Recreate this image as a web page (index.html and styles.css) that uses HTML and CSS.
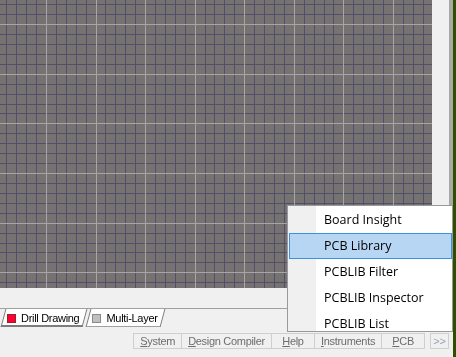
FILE: index.html
```html
<!DOCTYPE html>
<html>
<head>
<meta charset="utf-8">
<title>PCB Editor</title>
<link rel="stylesheet" href="styles.css">
</head>
<body>

<div class="window">
  <div class="main">
    <div class="editor">
      <canvas id="grid" class="grid" width="432" height="288"></canvas>
      <div class="vscroll"></div>
      <div class="edge"></div>
    </div>

    <div class="panel-gap"></div>

    <div class="layer-tabs">
      <div class="tab tab-active"><span class="swatch swatch-drill"></span>Drill Drawing</div>
      <div class="tab tab-next"><span class="swatch swatch-multi"></span>Multi-Layer</div>
    </div>

    <div class="statusbar">
      <span class="sb-btn"><u>S</u>ystem</span>
      <span class="sb-btn"><u>D</u>esign Compiler</span>
      <span class="sb-btn"><u>H</u>elp</span>
      <span class="sb-btn"><u>I</u>nstruments</span>
      <span class="sb-btn"><u>P</u>CB</span>
      <span class="sb-btn sb-more">&gt;&gt;</span>
    </div>
  </div>
  <div class="green-edge"></div>
</div>

<div class="popup-menu">
  <div class="menu-item">Board Insight</div>
  <div class="menu-item menu-item-hot">PCB Library</div>
  <div class="menu-item">PCBLIB Filter</div>
  <div class="menu-item">PCBLIB Inspector</div>
  <div class="menu-item">PCBLIB List</div>
</div>

<script src="script.js"></script>
</body>
</html>
```

FILE: styles.css
```css
body {margin:0; background-color:#F0F0F0; font-family:"Liberation Sans", Arial, sans-serif; font-size:11px;}

.window {display:flex; width:456px; height:357px; overflow:hidden;}
.main {width:453px; display:flex; flex-direction:column;}
.green-edge {width:3px; background-color:#2E4D05;}

/* canvas + scroll column */
.editor {display:flex; height:288px;}
.grid {display:block; width:432px; height:288px;}
.vscroll {width:17px; background-color:#F0F0F0;}
.edge {width:4px; background-color:#A9A9A4;}

.panel-gap {height:20px;}

/* layer tabs */
.layer-tabs {display:flex; height:20px; border-top:1px solid #A0A0A0; padding-left:3px; letter-spacing:-0.3px; color:#000000;}
.tab {position:relative; z-index:0; display:flex; align-items:center; height:18px; padding:0 6px 0 4px;}
.tab::before {content:""; position:absolute; top:0; bottom:0; left:0; right:0; z-index:-1; background-color:#FFFFFF; border-left:1px solid #7D7D7D; border-right:1px solid #7D7D7D; border-bottom:2px solid #7D7D7D; transform:skewX(-15deg);}
.tab-next {margin-left:3px;}
.tab-next::before {border-bottom:1px solid #A0A0A0;}
.swatch {width:9px; height:9px; box-sizing:border-box; margin-right:5px; border:1px solid #8A8A8A;}
.swatch-drill {background-color:#FF0033; border-color:#9A2030;}
.swatch-multi {background-color:#C0C0C0;}

/* status bar buttons */
.statusbar {display:flex; justify-content:flex-end; padding:4px 4px 0 0; height:24px; letter-spacing:-0.3px;}
.sb-btn {box-sizing:border-box; min-width:44px; height:16px; line-height:15px; padding:0 6px; margin-left:-1px; border:1px solid #CFCFCF; color:#6D6D6D; text-align:center; white-space:nowrap;}
.sb-more {min-width:17px; padding:0 2px; margin-left:5px; color:#98A4B8; letter-spacing:0;}

/* popup menu */
.popup-menu {position:absolute; left:287px; top:205px; width:166px; height:127px; box-sizing:border-box; padding-top:1px; overflow:hidden; border:1px solid #999999; background:linear-gradient(to right, #F0F0F0 28px, #FFFFFF 28px); font-family:"Open Sans", "Noto Sans", sans-serif; font-size:12.5px; color:#000000;}
.menu-item {height:26px; line-height:26px; padding-left:36px; white-space:nowrap;}
.menu-item-hot {box-sizing:border-box; margin-left:1px; padding-left:34px; line-height:24px; border:1px solid #3F90DB; background-color:#B7D6F4;}
```

FILE: script.js
```js
var grid = document.getElementById("grid");
var ctx = grid.getContext("2d");
var w = grid.width;
var h = grid.height;

ctx.fillStyle = "#767272";
ctx.fillRect(0, 0, w, h);

// grid pitch is slightly under 10px at this zoom
function drawLines(major) {
	var k, x, y;
	ctx.fillStyle = major ? "#A6A6A6" : "#50506A";
	for (k = 0; (x = 6.3 + 9.914 * k) < w; k++) {
		if (((k + 1) % 5 == 0) == major) ctx.fillRect(Math.round(x), 0, 1, h);
	}
	for (k = 0; (y = 4.2 + 9.93 * k) < h; k++) {
		if (((k + 3) % 5 == 0) == major) ctx.fillRect(0, Math.round(y), w, 1);
	}
}

drawLines(false);
drawLines(true);
```
